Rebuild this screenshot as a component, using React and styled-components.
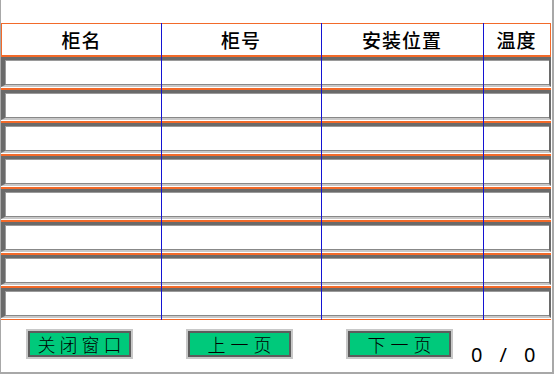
import React from 'react';
import styled, { createGlobalStyle } from 'styled-components';

const colors = {
    orange: '#f26a2a',
    frame: '#a8a8a8',
    dark: '#6a6a6a',
    light: '#c8c8c8',
    blue: '#1414d2',
    green: '#00c97b',
};

const GlobalStyle = createGlobalStyle`
    html, body {
        margin: 0;
        padding: 0;
        background: #ffffff;
    }
    body {
        font-family: "Noto Sans CJK SC", "Noto Sans", sans-serif;
    }
`;

const Panel = styled.div`
    box-sizing: border-box;
    width: 554px;
    height: 374px;
    padding-top: 23px;
    background: #ffffff;
    border-left: 1px solid ${colors.frame};
    border-right: 2px solid ${colors.frame};
    border-bottom: 2px solid ${colors.frame};
    display: flex;
    flex-direction: column;
`;

const Table = styled.div`
    position: relative;
    width: 550px;
    display: flex;
    flex-direction: column;
`;

const Header = styled.div`
    box-sizing: border-box;
    height: 33px;
    border: 1px solid ${colors.orange};
    display: grid;
    grid-template-columns: 159px 160px 162px 1fr;
    align-items: center;
`;

const HeadCell = styled.div`
    text-align: center;
    font-size: 19px;
    font-weight: 500;
    line-height: 31px;
    color: #000;
    letter-spacing: 1px;
`;

const Row = styled.div`
    box-sizing: border-box;
    height: 33px;
    border-top: 1px solid ${colors.orange};
    border-bottom: 1px solid ${colors.orange};
    display: flex;
    padding-bottom: 1px;
    background: #ffffff;
    &:first-of-type {
        border-top: none;
        padding-top: 1px;
    }
`;

const Field = styled.div`
    box-sizing: border-box;
    flex: 1;
    background: #ffffff;
    border-top: 3px solid ${colors.dark};
    border-left: 4px solid ${colors.dark};
    border-right: 2px solid ${colors.dark};
    border-bottom: 2px solid ${colors.light};
    box-shadow: inset 0 -1px 0 #888888, inset 1px 1px 0 #9a9a9a;
`;

const ColumnLine = styled.div`
    position: absolute;
    top: 0;
    bottom: 0;
    width: 1px;
    background: ${colors.blue};
`;

const Footer = styled.div`
    display: flex;
    align-items: flex-start;
    padding: 9px 0 0 25px;
    gap: 53px;
`;

const Button = styled.div`
    box-sizing: border-box;
    width: 107px;
    height: 30px;
    border: 2px solid ${colors.light};
    box-shadow: inset 0 0 0 2px #5c5c5c;
    background: ${colors.green};
    display: flex;
    align-items: center;
    justify-content: center;
    font-size: 18px;
    font-weight: 300;
    color: #000;
    letter-spacing: ${(p) => p.$spacing}px;
    text-indent: ${(p) => p.$spacing}px;
`;

const Counter = styled.div`
    display: flex;
    gap: 17px;
    margin-left: -35px;
    margin-top: 14px;
    font-family: "Noto Sans", sans-serif;
    font-size: 20px;
    line-height: 24px;
    color: #000;
`;

const columns = [160, 320, 482];
const headers = ['柜名', '柜号', '安装位置', '温度'];

export default function App() {
    return (
        <>
            <GlobalStyle />
            <Panel>
                <Table>
                    <Header>
                        {headers.map((h) => (
                            <HeadCell key={h}>{h}</HeadCell>
                        ))}
                    </Header>
                    {Array.from({ length: 8 }).map((_, i) => (
                        <Row key={i}>
                            <Field />
                        </Row>
                    ))}
                    {columns.map((x) => (
                        <ColumnLine key={x} style={{ left: x }} />
                    ))}
                </Table>
                <Footer>
                    <Button $spacing={4}>关闭窗口</Button>
                    <Button $spacing={5}>上一页</Button>
                    <Button $spacing={5}>下一页</Button>
                    <Counter>
                        <span>0</span>
                        <span>/</span>
                        <span>0</span>
                    </Counter>
                </Footer>
            </Panel>
        </>
    );
}
